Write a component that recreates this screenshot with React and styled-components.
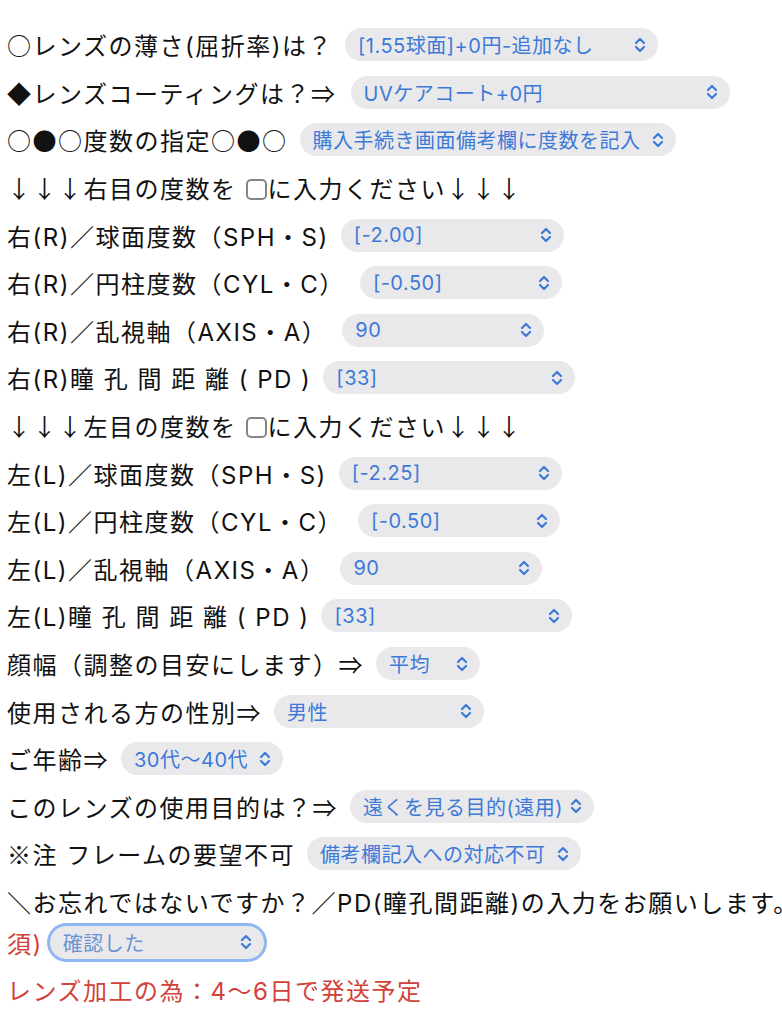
import styled, { createGlobalStyle } from "styled-components";

const GlobalStyle = createGlobalStyle`
  html, body {
    margin: 0;
    padding: 0;
    background: #fff;
    overflow-x: hidden;
  }
  body {
    font-family: "Inter", "Noto Sans CJK JP", sans-serif;
    color: #111;
  }
`;

const Page = styled.div`
  width: 782px;
  padding: 21px 0 0 7px;
  box-sizing: border-box;
  overflow: hidden;
`;

const Row = styled.div`
  height: 47.6px;
  margin-top: ${(p) => p.$mt ?? 0}px;
  display: flex;
  align-items: center;
  gap: ${(p) => p.$gap ?? 12}px;
  font-size: 24px;
  white-space: nowrap;
  color: ${(p) => (p.$red ? "#d2413a" : "#111")};
`;

const Label = styled.span`
  letter-spacing: ${(p) => p.$ls ?? 1.5}px;
`;

const Sym = styled.span`
  font-family: "Noto Sans CJK JP", sans-serif;
`;

const Box = styled.span`
  display: inline-block;
  width: 17px;
  height: 17px;
  border: 2px solid #858585;
  border-radius: 5px;
  margin: 0 1px 0 9px;
  vertical-align: -2px;
`;

const Select = styled.div`
  width: ${(p) => p.$w}px;
  height: 33px;
  box-sizing: border-box;
  margin-left: ${(p) => p.$ml ?? 0}px;
  padding: 0 12px 0 13px;
  display: flex;
  align-items: center;
  justify-content: space-between;
  background: #e9e9eb;
  border-radius: 17px;
  font-size: 20px;
  letter-spacing: 0.5px;
  box-shadow: ${(p) => (p.$focus ? "0 0 0 3px #8fb8f2" : "none")};
`;

const Value = styled.span`
  color: ${(p) => (p.$muted ? "#6c93cf" : "#3d7ad8")};
`;

const Chevron = () => (
  <svg width="12" height="16" viewBox="0 0 12 16" fill="none">
    <path d="M2 6 L6 2 L10 6" stroke="#3d7ad8" strokeWidth="2.2" strokeLinecap="round" strokeLinejoin="round" />
    <path d="M2 10 L6 14 L10 10" stroke="#3d7ad8" strokeWidth="2.2" strokeLinecap="round" strokeLinejoin="round" />
  </svg>
);

const Pick = ({ w, ml, focus, muted, children }) => (
  <Select $w={w} $ml={ml} $focus={focus}>
    <Value $muted={muted}>{children}</Value>
    <Chevron />
  </Select>
);

export default function App() {
  return (
    <>
      <GlobalStyle />
      <Page>
        <Row>
          <Label><Sym>○</Sym>レンズの薄さ(屈折率)は？</Label>
          <Pick w={313}>[1.55球面]+0円-追加なし</Pick>
        </Row>
        <Row>
          <Label><Sym>◆</Sym>レンズコーティングは？<Sym>⇒</Sym></Label>
          <Pick w={379} ml={2}>UVケアコート+0円</Pick>
        </Row>
        <Row>
          <Label><Sym>○●○</Sym>度数の指定<Sym>○●○</Sym></Label>
          <Pick w={376}>購入手続き画面備考欄に度数を記入</Pick>
        </Row>
        <Row>
          <Label><Sym>↓↓↓</Sym>右目の度数を<Box />に入力ください<Sym>↓↓↓</Sym></Label>
        </Row>
        <Row>
          <Label>右(R)／球面度数（SPH・S)</Label>
          <Pick w={223}>[-2.00]</Pick>
        </Row>
        <Row>
          <Label>右(R)／円柱度数（CYL・C）</Label>
          <Pick w={202} ml={3}>[-0.50]</Pick>
        </Row>
        <Row>
          <Label>右(R)／乱視軸（AXIS・A）</Label>
          <Pick w={202} ml={3}>90</Pick>
        </Row>
        <Row>
          <Label>右(R)瞳 孔 間 距 離 ( PD )</Label>
          <Pick w={252}>[33]</Pick>
        </Row>
        <Row>
          <Label><Sym>↓↓↓</Sym>左目の度数を<Box />に入力ください<Sym>↓↓↓</Sym></Label>
        </Row>
        <Row>
          <Label>左(L)／球面度数（SPH・S)</Label>
          <Pick w={223}>[-2.25]</Pick>
        </Row>
        <Row>
          <Label>左(L)／円柱度数（CYL・C）</Label>
          <Pick w={202} ml={3}>[-0.50]</Pick>
        </Row>
        <Row>
          <Label>左(L)／乱視軸（AXIS・A）</Label>
          <Pick w={202} ml={3}>90</Pick>
        </Row>
        <Row>
          <Label>左(L)瞳 孔 間 距 離 ( PD )</Label>
          <Pick w={251}>[33]</Pick>
        </Row>
        <Row>
          <Label>顔幅（調整の目安にします）<Sym>⇒</Sym></Label>
          <Pick w={104}>平均</Pick>
        </Row>
        <Row>
          <Label>使用される方の性別<Sym>⇒</Sym></Label>
          <Pick w={210}>男性</Pick>
        </Row>
        <Row>
          <Label>ご年齢<Sym>⇒</Sym></Label>
          <Pick w={162}>30代～40代</Pick>
        </Row>
        <Row>
          <Label>このレンズの使用目的は？<Sym>⇒</Sym></Label>
          <Pick w={244}>遠くを見る目的(遠用)</Pick>
        </Row>
        <Row>
          <Label><Sym>※</Sym>注 フレームの要望不可</Label>
          <Pick w={274}>備考欄記入への対応不可</Pick>
        </Row>
        <Row>
          <Label>＼お忘れではないですか？／PD(瞳孔間距離)の入力をお願いします。</Label>
        </Row>
        <Row $red $gap={7} $mt={-7}>
          <Label>須)</Label>
          <Pick w={214} focus muted>確認した</Pick>
        </Row>
        <Row $red>
          <Label>レンズ加工の為：4～6日で発送予定</Label>
        </Row>
      </Page>
    </>
  );
}
